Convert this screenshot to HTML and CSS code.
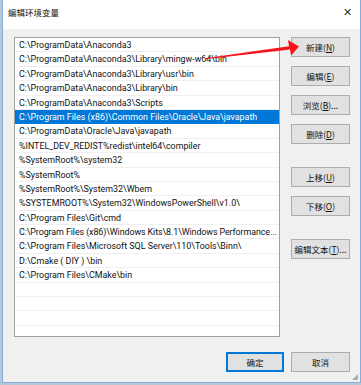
FILE: index.html
```html
<!DOCTYPE html>
<html>
<head>
    <title>编辑环境变量</title>
    <link rel="stylesheet" href="styles.css">
</head>
<body>
    <div class="window">
        <div class="titlebar">
            <span class="title">编辑环境变量</span>
            <span class="close">✕</span>
        </div>
        <div class="content">
            <div class="list">
                <div class="row">C:\ProgramData\Anaconda3</div>
                <div class="row">C:\ProgramData\Anaconda3\Library\mingw-w64\bin</div>
                <div class="row">C:\ProgramData\Anaconda3\Library\usr\bin</div>
                <div class="row">C:\ProgramData\Anaconda3\Library\bin</div>
                <div class="row">C:\ProgramData\Anaconda3\Scripts</div>
                <div class="row selected">C:\Program Files (x86)\Common Files\Oracle\Java\javapath</div>
                <div class="row">C:\ProgramData\Oracle\Java\javapath</div>
                <div class="row">%INTEL_DEV_REDIST%redist\intel64\compiler</div>
                <div class="row">%SystemRoot%\system32</div>
                <div class="row">%SystemRoot%</div>
                <div class="row">%SystemRoot%\System32\Wbem</div>
                <div class="row">%SYSTEMROOT%\System32\WindowsPowerShell\v1.0\</div>
                <div class="row">C:\Program Files\Git\cmd</div>
                <div class="row tight">C:\Program Files (x86)\Windows Kits\8.1\Windows Performance...</div>
                <div class="row">C:\Program Files\Microsoft SQL Server\110\Tools\Binn\</div>
                <div class="row">D:\Cmake ( DIY ) \bin</div>
                <div class="row">C:\Program Files\CMake\bin</div>
                <div class="row"></div>
                <div class="row"></div>
                <div class="row"></div>
                <div class="row"></div>
            </div>
            <div class="side">
                <button class="btn">新建(<u>N</u>)</button>
                <button class="btn">编辑(<u>E</u>)</button>
                <button class="btn">浏览(<u>B</u>)...</button>
                <button class="btn">删除(<u>D</u>)</button>
                <button class="btn gap">上移(<u>U</u>)</button>
                <button class="btn">下移(<u>O</u>)</button>
                <button class="btn gap">编辑文本(<u>T</u>)...</button>
            </div>
        </div>
        <div class="footer">
            <button class="btn default">确定</button>
            <button class="btn">取消</button>
        </div>
        <div class="grip"></div>
    </div>

    <svg class="arrow" width="361" height="385" viewBox="0 0 361 385">
        <polygon points="205,58.2 289,46.2 288,40 299,46.5 291,55.5 290,49.6 205,59.2" fill="#f5141e"/>
    </svg>
</body>
</html>
```

FILE: styles.css
```css
body {
    margin: 0;
    width: 361px;
    height: 385px;
    background: #b9c6d3;
    font-family: Roboto, 'Noto Sans', 'Noto Sans CJK SC', sans-serif;
    position: relative;
    overflow: hidden;
}
.window {
    margin-left: 2px;
    width: 357px;
    height: 382px;
    border: 1px solid #7eaee2;
    border-top: none;
    background: #f0f0f0;
    display: flex;
    flex-direction: column;
    position: relative;
}
.titlebar {
    height: 29px;
    background: #fff;
    display: flex;
    align-items: center;
    justify-content: space-between;
    padding: 0 8px 5px 5px;
    box-sizing: border-box;
}
.title {
    font-family: 'Noto Sans CJK SC', sans-serif;
    font-size: 8.5px;
    color: #111;
}
.close {
    font-size: 11px;
    color: #333;
}
.content {
    display: flex;
    padding: 8px 0 0 11px;
}
.list {
    width: 264px;
    height: 298px;
    background: #fff;
    border: 1px solid #a0a0a0;
    overflow: hidden;
}
.row {
    height: 14.4px;
    line-height: 14.4px;
    padding-left: 4px;
    font-size: 8.9px;
    color: #111;
    white-space: nowrap;
    overflow: hidden;
    border-bottom: 1px solid #f0f0f0;
    box-sizing: border-box;
}
.row.tight {
    letter-spacing: -0.08px;
}
.row.selected {
    background: #0078d7;
    color: #fff;
    border-bottom-color: #0078d7;
}
.side {
    display: flex;
    flex-direction: column;
    gap: 9px;
    margin-left: 11px;
}
.btn {
    width: 59px;
    height: 20px;
    padding: 0;
    background: #e1e1e1;
    border: 1px solid #adadad;
    font-family: 'Noto Sans CJK SC', sans-serif;
    font-size: 8.5px;
    color: #111;
    white-space: nowrap;
}
.side .gap {
    margin-top: 14px;
}
.footer {
    display: flex;
    justify-content: flex-end;
    gap: 7px;
    padding: 15px 10px 0 0;
}
.btn.default {
    border: 2px solid #0078d7;
    width: 58px;
}
.grip {
    position: absolute;
    right: 2px;
    bottom: 2px;
    width: 6px;
    height: 6px;
    background: radial-gradient(circle, #a8a8a8 0.7px, transparent 1px) 0 0 / 2px 2px;
    clip-path: polygon(100% 0, 100% 100%, 0 100%);
}
.arrow {
    position: absolute;
    left: 0;
    top: 0;
}
```
